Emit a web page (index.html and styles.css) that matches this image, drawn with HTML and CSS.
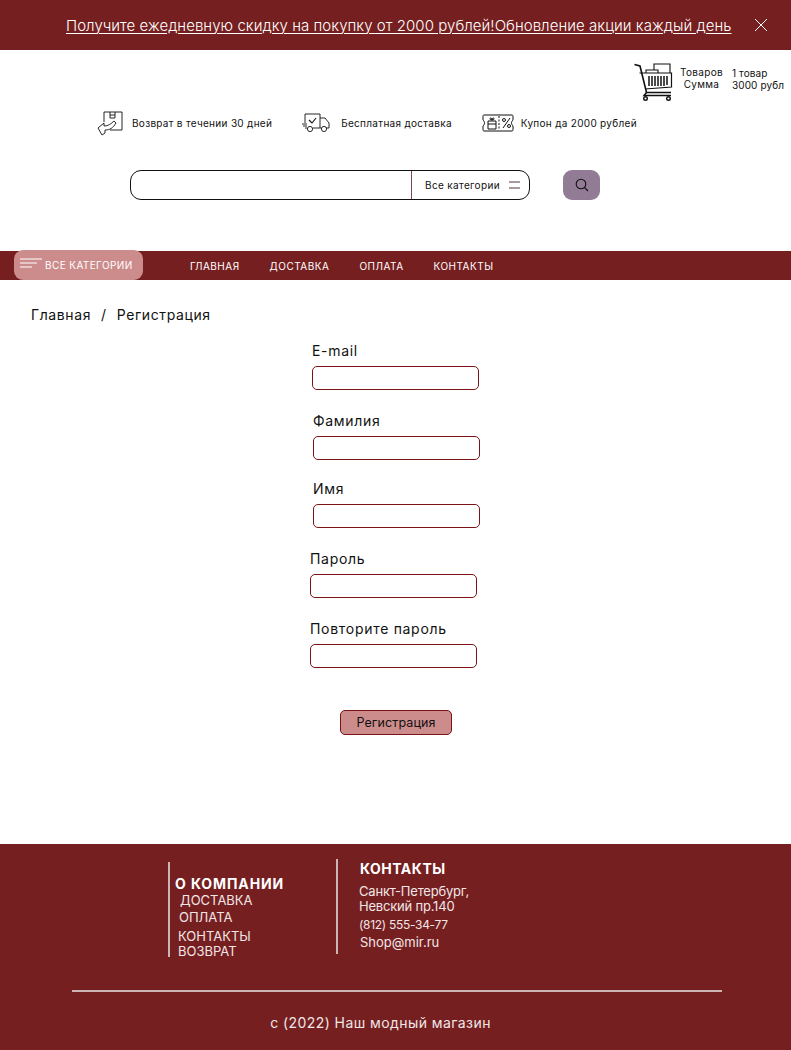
FILE: index.html
```html
<!DOCTYPE html>
<html lang="ru">
<head>
	<meta charset="UTF-8">
	<title>Регистрация</title>
	<link rel="stylesheet" href="styles.css">
</head>
<body>
<div class="promo">
	<a class="promo_text" href="#">Получите ежедневную скидку на покупку от 2000 рублей!Обновление акции каждый день</a>
	<svg class="promo_close" width="14" height="14" viewBox="0 0 14 14"><path d="M1 1L13 13M13 1L1 13" stroke="#fff" stroke-width="1" fill="none"/></svg>
</div>

<div class="head">
	<div class="cart">
		<svg class="cart_icon" width="39" height="38" viewBox="0 0 39 38" fill="none" stroke="#111">
			<path d="M0.5 1.5L6 3L12.5 29.5H37" stroke-width="1.6"/>
			<path d="M12.5 29.5L10 32.5H37" stroke-width="1.4"/>
			<path d="M5.5 10H37.5V24L11 26" stroke-width="1.2"/>
			<path d="M12 10V7H24V10M20 7V1H36V10" stroke-width="1.1"/>
			<path d="M15 13V23M18 13V23M21 13V23M24 13V23M27 13V23M30 13V23M33 13V22" stroke-width="1.5"/>
			<circle cx="11.5" cy="35.5" r="1.8" stroke-width="1.4"/>
			<circle cx="34.5" cy="35.5" r="1.8" stroke-width="1.4"/>
		</svg>
		<div class="cart_labels"><div>Товаров</div><div>Сумма</div></div>
		<div class="cart_values"><div>1 товар</div><div>3000 рубл</div></div>
	</div>

	<div class="perks">
		<div class="perk perk_return">
			<svg width="26" height="26" viewBox="0 0 26 26" fill="none" stroke="#111" stroke-width="0.9">
				<path d="M7 2H25V20H13"/><path d="M7 2V12"/><path d="M13 2V8H18V2M13 5H18"/>
				<path d="M1 18L7 13V16C11 16 14 14 17 11L19 13C16 18 13 20 8 20V23L5 25Z" fill="#fff"/>
			</svg>
			<span>Возврат в течении 30 дней</span>
		</div>
		<div class="perk perk_ship">
			<svg width="28" height="20" viewBox="0 0 28 20" fill="none" stroke="#111" stroke-width="0.9">
				<path d="M3 1H18V15H11M3 1V10M3 15H5"/><path d="M18 5H23L27 10V15H24M18 15H19"/>
				<path d="M7 7L10 10L14 5" stroke-width="1.1"/><path d="M0 11H5M1 13H5"/>
				<circle cx="8" cy="16" r="2.6"/><circle cx="22" cy="16" r="2.6"/>
			</svg>
			<span>Бесплатная доставка</span>
		</div>
		<div class="perk perk_coupon">
			<svg width="32" height="18" viewBox="0 0 32 18" fill="none" stroke="#111" stroke-width="1">
				<path d="M2 1H30C31 1 31 2 31 3V6C29 8 29 10 31 12V15C31 16 31 17 30 17H2C1 17 1 16 1 15V12C3 10 3 8 1 6V3C1 2 1 1 2 1Z"/>
				<path d="M6 7H14V15H6ZM6 10H14M8 5C8 3 10 4 10 6C10 4 12 3 12 5C12 6 10 6 10 6C10 6 8 6 8 5Z"/>
				<path d="M17 2V16" stroke-dasharray="2 1.5"/>
				<path d="M21 14L28 4"/><circle cx="22" cy="6" r="1.5"/><circle cx="27" cy="12" r="1.5"/>
			</svg>
			<span>Купон да 2000 рублей</span>
		</div>
	</div>

	<div class="search">
		<div class="search_box">
			<input class="search_input" type="text">
			<div class="search_cat">
				<span>Все категории</span>
				<svg width="11" height="8" viewBox="0 0 11 8"><path d="M0 1H11M0 7H11" stroke="#5c3335" stroke-width="1"/></svg>
			</div>
		</div>
		<div class="search_btn">
			<svg width="14" height="14" viewBox="0 0 14 14" fill="none" stroke="#111" stroke-width="1.1"><circle cx="6" cy="6" r="4.8"/><path d="M9.5 9.5L13 13"/></svg>
		</div>
	</div>
</div>

<div class="nav">
	<div class="nav_all">
		<svg width="22" height="11" viewBox="0 0 22 11"><path d="M0 1H22M0 5H17M0 9H12" stroke="#fff" stroke-width="1"/></svg>
		<span>ВСЕ КАТЕГОРИИ</span>
	</div>
	<ul class="nav_list">
		<li>ГЛАВНАЯ</li>
		<li>ДОСТАВКА</li>
		<li>ОПЛАТА</li>
		<li>КОНТАКТЫ</li>
	</ul>
</div>

<div class="crumbs"><span>Главная</span><span>/</span><span>Регистрация</span></div>

<form class="form">
	<div class="field f_mail"><label>E-mail</label><input type="text"></div>
	<div class="field f_last"><label>Фамилия</label><input type="text"></div>
	<div class="field f_name"><label>Имя</label><input type="text"></div>
	<div class="field f_pass"><label>Пароль</label><input type="password"></div>
	<div class="field f_rep"><label>Повторите пароль</label><input type="password"></div>
	<button class="submit" type="button">Регистрация</button>
</form>

<div class="foot">
	<div class="foot_cols">
		<div class="foot_about">
			<h4>О КОМПАНИИ</h4>
			<a class="l1">ДОСТАВКА</a>
			<a class="l2">ОПЛАТА</a>
			<a class="l3">КОНТАКТЫ</a>
			<a class="l4">ВОЗВРАТ</a>
		</div>
		<div class="foot_contacts">
			<h4>КОНТАКТЫ</h4>
			<p class="addr">Санкт-Петербург,<br>Невский пр.140</p>
			<p class="phone">(812) 555-34-77</p>
			<p class="mail">Shop@mir.ru</p>
		</div>
	</div>
	<div class="foot_line"></div>
	<div class="foot_copy">c (2022) Наш модный магазин</div>
</div>
</body>
</html>
```

FILE: styles.css
```css
* {box-sizing: border-box;}
body,p,ul,li,h4 {margin:0; padding:0;}
body {font-family: "Inter", "Noto Sans", sans-serif; color:#111; background:#fff; width:791px; height:1050px; overflow:hidden;}

.promo {height:50px; background:#761f21; display:flex; align-items:center; padding-left:66px;}
.promo_text {color:#fff; font-size:15px; font-weight:300; letter-spacing:0.05px; text-decoration:underline; text-decoration-thickness:1px; text-underline-offset:2px; white-space:nowrap;}
.promo_close {margin-left:22px;}

.head {height:201px; padding-top:13px;}
.cart {display:flex; height:38px; font-size:10px; line-height:12px; padding-left:634px;}
.cart_icon {flex:none;}
.cart_labels {margin:3px 0 0 7px; text-align:center; width:43px; letter-spacing:0.3px; white-space:nowrap;}
.cart_values {margin:4px 0 0 9px; white-space:nowrap; letter-spacing:0.1px;}

.perks {display:flex; align-items:center; margin-top:9px; padding-left:97px; font-size:10px; height:26px; letter-spacing:0.3px;}
.perk {display:flex; align-items:center; white-space:nowrap;}
.perk_return span {margin-left:9px;}
.perk_ship {margin-left:30px;}
.perk_ship span {margin-left:11px;}
.perk_coupon {margin-left:30px;}
.perk_coupon span {margin-left:7px;}

.search {display:flex; margin-top:34px; padding-left:130px;}
.search_box {width:400px; height:30px; border:1px solid #111; border-radius:11px; display:flex;}
.search_input {flex:1; min-width:0; border:none; background:none; outline:none;}
.search_cat {width:118px; border-left:1px solid #7a4a4c; display:flex; align-items:center; padding-left:13px; font-size:10px; letter-spacing:0.35px;}
.search_cat svg {margin-left:9px;}
.search_btn {width:37px; height:30px; margin-left:33px; background:#927b95; border-radius:9px; display:flex; align-items:center; justify-content:center;}

.nav {height:29px; background:#761f21; display:flex; align-items:center; padding-left:14px; color:#fff; font-size:10px; letter-spacing:0.5px;}
.nav_all {width:129px; height:30px; margin-top:-1px; background:#cd8c8c; border-radius:9px; display:flex; align-items:center; padding-left:6px;}
.nav_all svg {margin-top:-3px;}
.nav_all span {margin-left:3px; letter-spacing:0.4px;}
.nav_list {display:flex; list-style:none; margin-left:47px; gap:30px;}

.crumbs {display:flex; gap:10px; padding:26px 0 0 31px; font-size:14px; line-height:18px; letter-spacing:0.6px;}

.form {display:flex; flex-direction:column; margin-top:18px; font-size:14px;}
.field label {display:block; line-height:18px; letter-spacing:0.7px;}
.field input {display:block; width:167px; height:24px; margin-top:6px; border:1px solid #7b1416; border-radius:5px; background:#fff; outline:none;}
.f_mail {margin-left:312px;}
.f_last {margin:22px 0 0 313px;}
.f_name {margin:20px 0 0 313px;}
.f_pass {margin:22px 0 0 310px;}
.f_rep {margin:22px 0 0 310px;}
.submit {width:112px; height:25px; margin:42px 0 0 340px; padding:0; background:#cd8c8c; border:1px solid #7b1416; border-radius:5px; font:12.5px "Inter", sans-serif; letter-spacing:0.1px; color:#111;}

.foot {margin-top:109px; height:206px; background:#761f21; color:#f1e6e6; padding-top:15px;}
.foot_cols {display:flex; padding-left:168px; font-size:13px;}
.foot_about {width:168px; height:95px; margin-top:3px; border-left:2px solid #cdb4b4; display:flex; flex-direction:column; line-height:15px;}
.foot_about h4 {font-size:14px; line-height:17px; margin:13px 0 0 5px; font-weight:700; letter-spacing:0.9px; color:#fff;}
.foot_about a {display:block;}
.l1 {margin:1px 0 0 10px;}
.l2 {margin:2px 0 0 9px;}
.l3 {margin:4px 0 0 8px;}
.l4 {margin:0 0 0 8px;}
.foot_contacts {height:95px; border-left:2px solid #cdb4b4; padding-left:22px; line-height:15px;}
.foot_contacts h4 {font-size:14px; line-height:17px; margin-top:1px; font-weight:700; letter-spacing:0.5px; color:#fff;}
.addr {margin:7px 0 0 -1px; letter-spacing:-0.2px;}
.phone {margin:3px 0 0 -1px; font-size:12px; letter-spacing:-0.3px;}
.mail {margin:3px 0 0 0;}
.foot_line {width:650px; height:2px; margin:33px 0 0 72px; background:#cdb4b4;}
.foot_copy {margin-top:22px; text-align:center; padding-right:30px; font-size:14px; line-height:18px; letter-spacing:0.43px;}
```
